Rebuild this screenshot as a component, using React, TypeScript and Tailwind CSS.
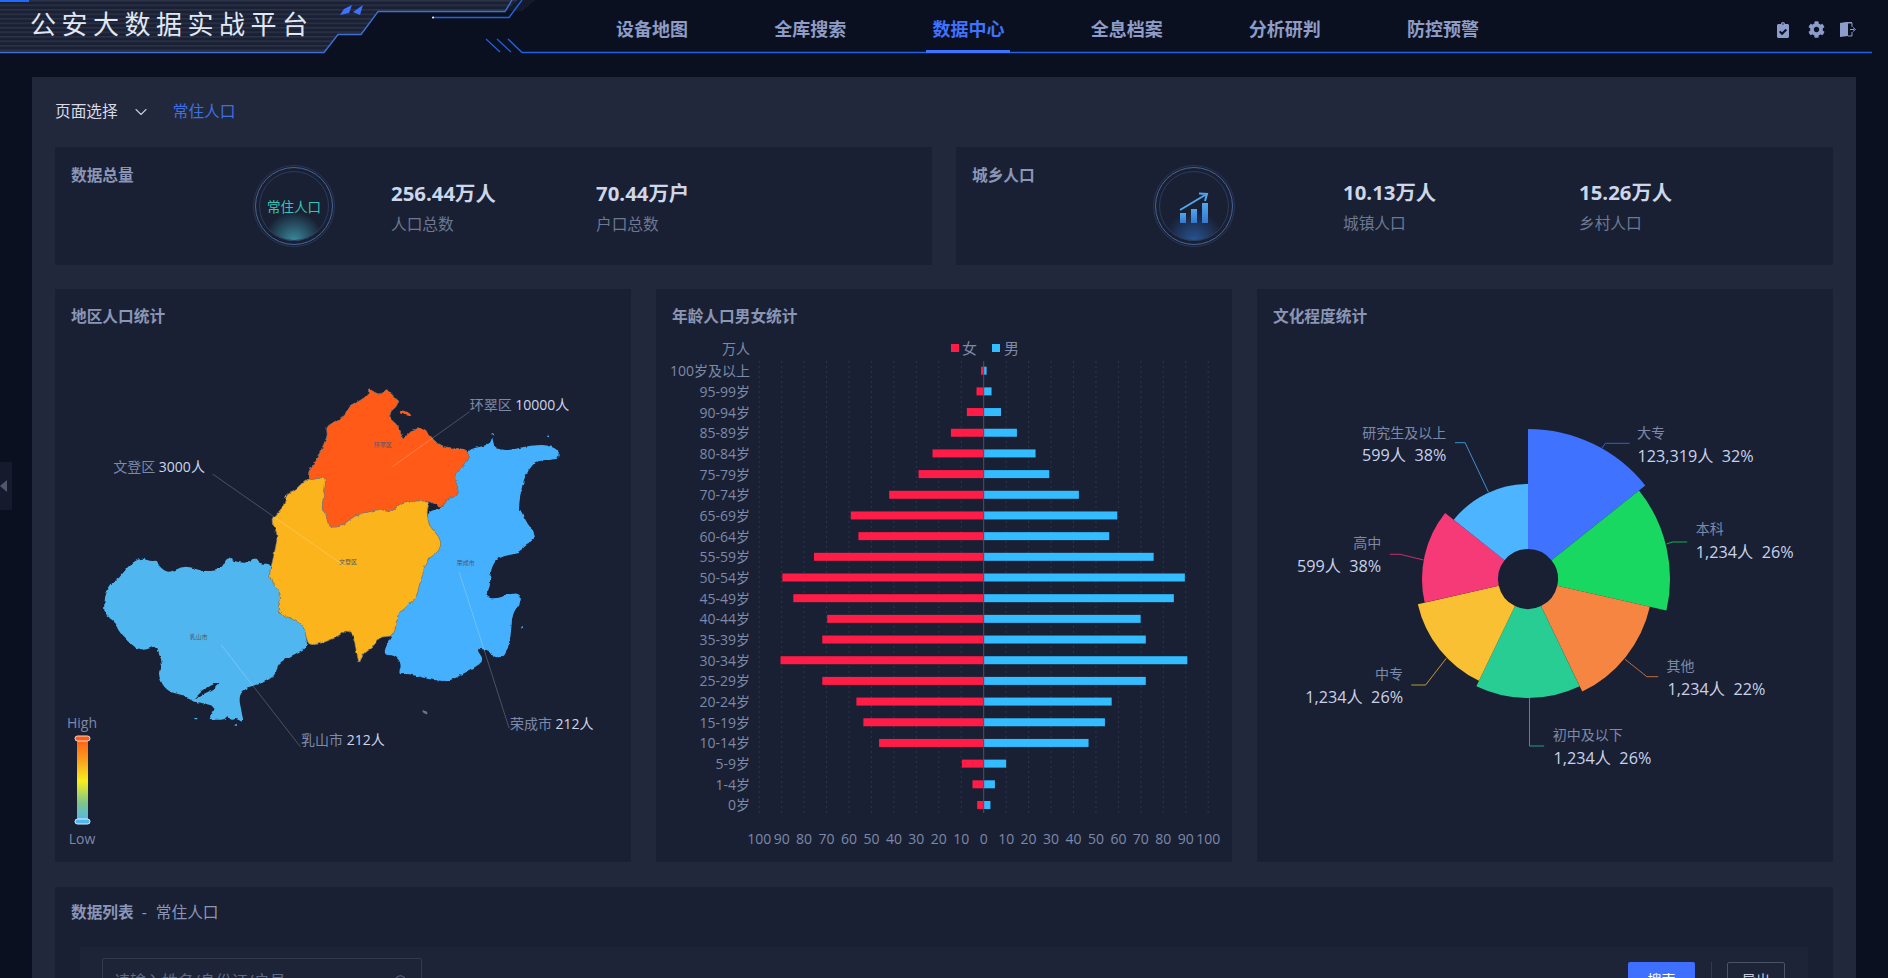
import { ReactNode } from "react";
import { FaClipboardCheck, FaCog } from "react-icons/fa";
import { ChevronDown, Search } from "lucide-react";

const nav = ["设备地图", "全库搜索", "数据中心", "全息档案", "分析研判", "防控预警"];

// chart svgs use page pixels in their viewBox, z* helpers convert traced coords
const mx = (z: number) => 50 + z / 2.657;
const my = (z: number) => 370 + z / 3;
const px = (z: number) => 1260 + z / 2.657;
const py = (z: number) => 400 + z / 3;

// closed outline rounded through edge midpoints, keeps the coast from looking polygonal
function coast(flat: number[]) {
    const pts: [number, number][] = [];
    for (let i = 0; i < flat.length; i += 2) pts.push([mx(flat[i]), my(flat[i + 1])]);
    const mid = (a: [number, number], b: [number, number]) => `${((a[0] + b[0]) / 2).toFixed(1)} ${((a[1] + b[1]) / 2).toFixed(1)}`;
    let d = `M${mid(pts[pts.length - 1], pts[0])}`;
    pts.forEach((p, i) => {
        d += ` Q${p[0].toFixed(1)} ${p[1].toFixed(1)} ${mid(p, pts[(i + 1) % pts.length])}`;
    });
    return d + " Z";
}

const huancui = [685,325,690,295,712,268,730,215,738,195,733,168,770,150,785,135,792,108,820,95,832,85,848,75,845,55,860,65,870,72,885,70,895,55,905,72,925,88,922,110,905,122,900,145,925,165,938,213,955,185,985,172,1010,195,1018,208,1040,232,1110,237,1115,260,1095,295,1072,318,1082,345,1087,375,1060,385,1040,415,1010,392,950,393,930,400,905,430,880,415,850,425,810,435,780,465,760,472,740,470,735,435,720,420,735,335,725,320,700,330];
const wendeng = [590,445,622,410,628,372,650,365,685,325,700,330,725,320,735,335,720,420,735,435,740,470,760,472,780,465,810,435,850,425,880,415,905,430,930,400,950,393,1010,392,1000,425,1008,470,1035,500,1040,530,1025,552,1000,570,990,615,980,650,975,680,945,715,925,730,915,790,905,800,875,800,860,830,830,850,822,885,815,850,805,790,785,780,770,800,690,832,680,800,675,770,650,750,600,725,617,680,600,650,580,620,590,580,600,530,605,490,590,460];
const rongcheng = [1110,237,1170,225,1175,195,1180,235,1215,242,1260,230,1295,225,1320,225,1345,235,1358,258,1340,270,1295,270,1270,300,1255,340,1245,410,1250,420,1270,465,1290,490,1285,510,1255,530,1250,550,1190,560,1170,600,1170,650,1155,680,1185,688,1230,668,1252,675,1250,700,1228,730,1225,800,1210,860,1180,868,1170,840,1130,835,1155,870,1125,895,1100,910,1060,935,1020,930,985,922,945,910,925,915,935,880,915,855,883,855,905,800,915,790,925,730,945,715,975,680,980,650,990,615,1000,570,1025,552,1040,530,1035,500,1008,470,1000,425,1040,415,1060,385,1087,375,1082,345,1072,318,1095,295,1115,260];
const rushan = [590,580,580,620,600,650,617,680,600,725,650,750,675,770,680,800,685,832,640,858,605,880,600,915,565,940,530,948,500,975,510,1030,515,1060,495,1045,480,1052,472,1035,465,1048,445,1050,420,1045,440,1010,410,1000,378,995,355,975,310,965,285,915,300,880,288,850,285,825,245,845,205,815,180,780,170,750,140,735,150,650,185,625,205,590,240,562,270,575,285,570,290,590,315,610,345,590,375,590,410,605,455,600,470,560,490,575,530,580,545,560,555,582];
const bay = [376,998,400,965,430,945,450,935,440,955,415,968,385,985];
const islands = [
    { pts: [925,125,945,120,965,140,940,135], fill: "#ff5a17" },
    { pts: [380,1050,392,1042,392,1052], fill: "#50b6f0" },
    { pts: [488,1072,495,1058,498,1068], fill: "#50b6f0" },
    { pts: [988,1020,1000,1022,1005,1034,992,1030], fill: "#6a7690" },
    { pts: [1250,775,1256,765,1257,777], fill: "#45b0fd" },
    { pts: [1318,198,1326,196,1326,203], fill: "#45b0fd" },
    { pts: [1170,192,1178,188,1180,198], fill: "#45b0fd" },
];

const mapLabels = [
    { name: "环翠区", val: "10000人", x: 1115, y: 102 },
    { name: "文登区", val: "3000人", x: 168, y: 288 },
    { name: "荣成市", val: "212人", x: 1222, y: 1058 },
    { name: "乳山市", val: "212人", x: 667, y: 1108 },
];
const mapLines = [
    [910, 290, 1115, 125],
    [785, 590, 432, 312],
    [1087, 605, 1220, 1075],
    [455, 825, 665, 1130],
];
const mapSmall = [
    { t: "环翠区", x: 884, y: 225 },
    { t: "文登区", x: 792, y: 576 },
    { t: "荣成市", x: 1105, y: 578 },
    { t: "乳山市", x: 395, y: 802 },
];

const ages: [string, number, number][] = [
    ["100岁及以上", 1.2, 1.3], ["95-99岁", 3.2, 3.5], ["90-94岁", 7.5, 7.7], ["85-89岁", 14.6, 14.8],
    ["80-84岁", 22.8, 23.1], ["75-79岁", 29, 29.2], ["70-74岁", 42.1, 42.4], ["65-69岁", 59.2, 59.5],
    ["60-64岁", 55.8, 55.9], ["55-59岁", 75.6, 75.7], ["50-54岁", 89.7, 89.6], ["45-49岁", 84.8, 84.7],
    ["40-44岁", 69.7, 69.9], ["35-39岁", 71.9, 72.2], ["30-34岁", 90.5, 90.7], ["25-29岁", 71.9, 72.2],
    ["20-24岁", 56.7, 57], ["15-19岁", 53.6, 54], ["10-14岁", 46.6, 46.7], ["5-9岁", 9.7, 10],
    ["1-4岁", 5, 5], ["0岁", 2.9, 3],
];
const ticks = [100, 90, 80, 70, 60, 50, 40, 30, 20, 10, 0, 10, 20, 30, 40, 50, 60, 70, 80, 90, 100];

const zero = 983.7;
const perUnit = 2.245;

const slices = [
    { r: 150, color: "#3f72ff" },
    { r: 142, color: "#18d862" },
    { r: 125, color: "#f68542" },
    { r: 119, color: "#27cd92" },
    { r: 113, color: "#fac033" },
    { r: 106, color: "#f63a78" },
    { r: 95, color: "#4db5ff" },
];

function sector(r: number, i: number) {
    const cx = 1528, cy = 579, r0 = 30;
    const step = (Math.PI * 2) / 7;
    const a0 = i * step, a1 = (i + 1) * step;
    const p = (rad: number, a: number) => `${(cx + rad * Math.sin(a)).toFixed(2)} ${(cy - rad * Math.cos(a)).toFixed(2)}`;
    return `M${p(r0, a0)} L${p(r, a0)} A${r} ${r} 0 0 1 ${p(r, a1)} L${p(r0, a1)} A${r0} ${r0} 0 0 0 ${p(r0, a0)} Z`;
}

const pieLabels = [
    { name: "大专", val: "123,319人  32%", line: [908, 145, 918, 130, 982, 130], nx: 1002, ny: 98, vx: 1003, vy: 168, color: "#3f72ff", end: false },
    { name: "本科", val: "1,234人  26%", line: [1080, 432, 1095, 426, 1135, 426], nx: 1158, ny: 385, vx: 1158, vy: 455, color: "#18d862", end: false },
    { name: "其他", val: "1,234人  22%", line: [970, 778, 1028, 830, 1058, 830], nx: 1080, ny: 796, vx: 1083, vy: 866, color: "#f68542", end: false },
    { name: "初中及以下", val: "1,234人  26%", line: [716, 893, 716, 1038, 755, 1038], nx: 778, ny: 1004, vx: 780, vy: 1075, color: "#27cd92", end: false },
    { name: "中专", val: "1,234人  26%", line: [495, 775, 440, 855, 402, 855], nx: 380, ny: 821, vx: 380, vy: 890, color: "#fac033", end: true },
    { name: "高中", val: "599人  38%", line: [435, 480, 372, 463, 345, 463], nx: 322, ny: 428, vx: 322, vy: 497, color: "#f63a78", end: true },
    { name: "研究生及以上", val: "599人  38%", line: [607, 277, 545, 128, 518, 128], nx: 495, ny: 96, vx: 495, vy: 165, color: "#4db5ff", end: true },
];

function Ring({ id, glow, children }: { id: string; glow: string; children: ReactNode }) {
    return (
        <div className="relative w-[82px] h-[82px] shrink-0 flex items-center justify-center">
            <svg className="absolute inset-0" width="82" height="82" viewBox="0 0 82 82">
                <defs>
                    <radialGradient id={id} cx="50%" cy="100%" r="42%">
                        <stop offset="0%" stopColor={glow} stopOpacity="0.85" />
                        <stop offset="100%" stopColor={glow} stopOpacity="0" />
                    </radialGradient>
                </defs>
                <circle cx="41" cy="41" r="35" fill={`url(#${id})`} />
                <circle cx="41" cy="41" r="40.5" fill="none" stroke="#263654" strokeWidth="1" />
                <circle cx="41" cy="41" r="38.5" fill="none" stroke="#4a6594" strokeWidth="1" />
                <circle cx="41" cy="41" r="34.5" fill="none" stroke="#2b3b5c" strokeWidth="1" />
            </svg>
            {children}
        </div>
    );
}

function Stat({ value, label, className }: { value: string; label: string; className: string }) {
    return (
        <div className={className}>
            <div className="text-[20.4px] leading-[28px] font-bold text-[#ced6ea]">{value}</div>
            <div className="mt-[5px] text-[15.7px] leading-6 text-[#6d7893]">{label}</div>
        </div>
    );
}

function ChartCard({ title, children }: { title: string; children: ReactNode }) {
    return (
        <div className="w-[576px] h-[573px] bg-[#192034] flex flex-col">
            <div className="h-[47px] shrink-0 pl-4 pt-[16px] text-[15.7px] leading-[22px] font-bold text-[#8b96b6]">{title}</div>
            {children}
        </div>
    );
}

function MapChart() {
    return (
        <svg width="576" height="526" viewBox="55 336 576 526">
            <defs>
                <filter id="rough" filterUnits="userSpaceOnUse" x="55" y="336" width="576" height="526" colorInterpolationFilters="sRGB">
                    <feTurbulence type="fractalNoise" baseFrequency="0.18" numOctaves="2" seed="4" />
                    <feDisplacementMap in="SourceGraphic" scale="3.5" xChannelSelector="R" yChannelSelector="G" />
                </filter>
                <linearGradient id="legend" x1="0" y1="0" x2="0" y2="1">
                    <stop offset="0%" stopColor="#ff5a17" />
                    <stop offset="25%" stopColor="#fb9a1c" />
                    <stop offset="52%" stopColor="#f6ee1e" />
                    <stop offset="78%" stopColor="#7fc68a" />
                    <stop offset="100%" stopColor="#50b6f0" />
                </linearGradient>
            </defs>
            <g filter="url(#rough)">
                <path d={coast(rushan)} fill="#50b6f0" />
                <path d={coast(bay)} fill="#192034" />
                <path d={coast(rongcheng)} fill="#45b0fd" />
                <path d={coast(wendeng)} fill="#fbb41c" stroke="#80807a" strokeWidth="0.7" />
                <path d={coast(huancui)} fill="#ff5a17" stroke="#80807a" strokeWidth="0.7" />
                {islands.map((s, i) => (
                    <path key={i} d={coast(s.pts)} fill={s.fill} />
                ))}
            </g>
            {mapSmall.map(s => (
                <text key={s.t} x={mx(s.x)} y={my(s.y)} fontSize="6" fill="#4c5868" textAnchor="middle" dominantBaseline="central">{s.t}</text>
            ))}
            {mapLines.map((l, i) => (
                <line key={i} x1={mx(l[0])} y1={my(l[1])} x2={mx(l[2])} y2={my(l[3])} stroke="#ffffff" strokeOpacity="0.28" strokeWidth="0.8" />
            ))}
            {mapLabels.map(l => (
                <text key={l.name} x={mx(l.x)} y={my(l.y)} fontSize="14" dominantBaseline="central">
                    <tspan fill="#7d89a8">{l.name} </tspan>
                    <tspan fill="#ced6ea">{l.val}</tspan>
                </text>
            ))}
            <text x="82" y="722" fontSize="14" fill="#7d89a8" textAnchor="middle" dominantBaseline="central">High</text>
            <rect x="77" y="738" width="11" height="83" fill="url(#legend)" />
            <rect x="75" y="736" width="15" height="5" rx="2.5" fill="#ff5a17" stroke="#f3d9cc" strokeWidth="1" />
            <rect x="75" y="819" width="15" height="5" rx="2.5" fill="#50b6f0" stroke="#dff1fb" strokeWidth="1" />
            <text x="82" y="838" fontSize="14" fill="#7d89a8" textAnchor="middle" dominantBaseline="central">Low</text>
        </svg>
    );
}

function PyramidChart() {
    return (
        <svg width="576" height="526" viewBox="656 336 576 526">
            {ticks.map((_, i) => {
                const x = zero + (i - 10) * 22.45;
                return i === 10 ? null : <line key={i} x1={x} y1="361" x2={x} y2="813" stroke="#2c354c" strokeWidth="1" strokeDasharray="2 3" />;
            })}
            <text x="750" y="348" fontSize="14" fill="#7d89a8" textAnchor="end" dominantBaseline="central">万人</text>
            <rect x="951" y="344" width="8" height="8" fill="#ff1d47" />
            <text x="962" y="347.5" fontSize="15" fill="#7d89a8" dominantBaseline="central">女</text>
            <rect x="992" y="344" width="8" height="8" fill="#33bcff" />
            <text x="1004" y="347.5" fontSize="15" fill="#7d89a8" dominantBaseline="central">男</text>
            {ages.map(([label, f, m], i) => {
                const y = 370.7 + i * 20.68;
                return (
                    <g key={label}>
                        <text x="750" y={y} fontSize="14" fill="#7d89a8" textAnchor="end" dominantBaseline="central">{label}</text>
                        <rect x={zero - f * perUnit} y={y - 4} width={f * perUnit} height="8" fill="#ff1d47" />
                        <rect x={zero} y={y - 4} width={m * perUnit} height="8" fill="#33bcff" />
                    </g>
                );
            })}
            <line x1={zero} y1="361" x2={zero} y2="813" stroke="#4a5268" strokeWidth="1" />
            {ticks.map((t, i) => (
                <text key={i} x={zero + (i - 10) * 22.45} y="838" fontSize="14" fill="#7d89a8" textAnchor="middle" dominantBaseline="central">{t}</text>
            ))}
        </svg>
    );
}

function RoseChart() {
    return (
        <svg width="576" height="526" viewBox="1257 336 576 526">
            {slices.map((s, i) => (
                <path key={s.color} d={sector(s.r, i)} fill={s.color} />
            ))}
            {pieLabels.map(l => {
                const pts = [];
                for (let i = 0; i < l.line.length; i += 2) pts.push(`${px(l.line[i]).toFixed(1)},${py(l.line[i + 1]).toFixed(1)}`);
                const anchor = l.end ? "end" : "start";
                return (
                    <g key={l.name}>
                        <polyline points={pts.join(" ")} fill="none" stroke={l.color} strokeOpacity="0.75" strokeWidth="1" />
                        <text x={px(l.nx)} y={py(l.ny)} fontSize="14" fill="#7d89a8" textAnchor={anchor} dominantBaseline="central">{l.name}</text>
                        <text x={px(l.vx)} y={py(l.vy)} fontSize="16.2" fill="#c8d2ea" textAnchor={anchor} dominantBaseline="central" className="whitespace-pre">{l.val}</text>
                    </g>
                );
            })}
        </svg>
    );
}

export default function App() {
    return (
        <div className="relative h-screen overflow-hidden bg-[#0b1020] font-['Open_Sans','Noto_Sans_CJK_SC',sans-serif]">
            {/* header art: striped banner + blue rule */}
            <svg className="absolute left-0 top-0" width="1888" height="54" viewBox="0 0 1888 54">
                <defs>
                    <pattern id="stripes" width="4" height="4.5" patternUnits="userSpaceOnUse">
                        <rect width="4" height="4.5" fill="#1b2134" />
                        <rect width="4" height="1.5" fill="#2b3247" />
                    </pattern>
                </defs>
                <polygon points="0,0 535,0 522,11 377,11 361,34 338,34 324,52 0,52" fill="url(#stripes)" />
                <polygon points="505,11 518,0 535,0 522,11" fill="#141a2c" />
                <polyline points="0,52.5 324,52.5 338,34.5 361,34.5 378,11.5 505,11.5 512,0" fill="none" stroke="#3f6fd0" strokeWidth="1.4" />
                <rect x="0" y="0" width="29" height="2" fill="#1f6bff" />
                <polygon points="340,15 344,9 352,5 349,13" fill="#3f72ff" />
                <polygon points="353,12 363,5 360,15" fill="#3f72ff" />
                <polyline points="433,17.5 509,17.5 522,0" fill="none" stroke="#1f62e6" strokeWidth="1.4" />
                <circle cx="433" cy="17.5" r="1" fill="#ffffff" />
                <line x1="486" y1="39" x2="500" y2="52" stroke="#1f62e6" strokeWidth="1.2" />
                <line x1="497" y1="39" x2="511" y2="52" stroke="#1f62e6" strokeWidth="1.2" />
                <polyline points="508,39 522,52.5 1872,52.5" fill="none" stroke="#1f62e6" strokeWidth="1.4" />
            </svg>

            <header className="relative flex h-[53px]">
                <div className="w-[573px] shrink-0 pl-[30px] pt-[8px] text-[26px] leading-[32px] tracking-[5.5px] text-[#e0e8f5]">公安大数据实战平台</div>
                <nav className="flex pt-[6px]">
                    {nav.map(item => (
                        <div key={item} className={`relative w-[158.2px] flex items-center justify-center text-[18px] font-bold ${item === "数据中心" ? "text-[#3f72ff]" : "text-[#8e9cc6]"}`}>
                            {item}
                            {item === "数据中心" && <span className="absolute bottom-0 left-[37px] w-[84px] h-[3px] bg-[#3f72ff]" />}
                        </div>
                    ))}
                </nav>
                <div className="flex-1 flex items-center justify-end pr-[32px] pt-[6px] text-[#8c9ccb]">
                    <FaClipboardCheck size={16} />
                    <FaCog size={17} className="ml-[17px]" />
                    <svg className="ml-[15px]" width="16" height="15" viewBox="0 0 16 15">
                        <path d="M0 1 L6 0 H12 V1 H8 V14 L0 15 Z" fill="currentColor" />
                        <path d="M8 1 H12 V5 M12 10 V14 H8 M10 7.5 H14 M13 5.5 L15.5 7.5 L13 9.5" fill="none" stroke="currentColor" strokeWidth="1" />
                    </svg>
                </div>
            </header>

            <div className="absolute left-0 top-[462px] w-[12px] h-[48px] bg-[#151b2c] flex items-center">
                <span className="w-0 h-0 border-y-[6px] border-y-transparent border-r-[7px] border-r-[#4f596e]" />
            </div>

            <main className="ml-[32px] mr-[32px] mt-[24px] bg-[#22283c] px-[23px] pb-6">
                <div className="h-[70px] flex items-center text-[15.7px]">
                    <span className="text-[#d8dcea]">页面选择</span>
                    <ChevronDown size={20} strokeWidth={1.3} className="ml-[13px] text-[#c4cadb]" />
                    <span className="ml-[22px] text-[#3f6fe0]">常住人口</span>
                </div>

                <div className="flex gap-[24px]">
                    <div className="w-[877px] h-[118px] bg-[#192034] flex items-center">
                        <div className="w-[198px] self-start pl-4 pt-[16px] text-[15.7px] leading-[24px] font-bold text-[#8b96b6]">数据总量</div>
                        <Ring id="glow1" glow="#3f9fb0"><span className="relative mt-[2px] text-[13.5px] text-[#36c5b5]">常住人口</span></Ring>
                        <Stat value="256.44万人" label="人口总数" className="ml-[56px] w-[205px] pt-[3px]" />
                        <Stat value="70.44万户" label="户口总数" className="pt-[3px]" />
                    </div>
                    <div className="flex-1 h-[118px] bg-[#192034] flex items-center">
                        <div className="w-[197px] self-start pl-4 pt-[16px] text-[15.7px] leading-[24px] font-bold text-[#8b96b6]">城乡人口</div>
                        <Ring id="glow2" glow="#2a5fa8">
                            <svg className="relative mt-[3px]" width="30" height="31" viewBox="0 0 30 31">
                                <defs>
                                    <linearGradient id="bar" x1="0" y1="0" x2="0" y2="1">
                                        <stop offset="0%" stopColor="#4fa8ee" />
                                        <stop offset="100%" stopColor="#3478cc" />
                                    </linearGradient>
                                </defs>
                                <rect x="1" y="21" width="6" height="10" fill="url(#bar)" />
                                <rect x="12" y="17" width="6" height="14" fill="url(#bar)" />
                                <rect x="23" y="11" width="6" height="20" fill="url(#bar)" />
                                <path d="M1 18 L27 2.5 M20 1.5 L28 2 L26 9" fill="none" stroke="#4fa8ee" strokeWidth="2" />
                            </svg>
                        </Ring>
                        <Stat value="10.13万人" label="城镇人口" className="ml-[108px] w-[236px] pt-[1px]" />
                        <Stat value="15.26万人" label="乡村人口" className="pt-[1px]" />
                    </div>
                </div>

                <div className="mt-[24px] flex gap-[25px]">
                    <ChartCard title="地区人口统计"><MapChart /></ChartCard>
                    <ChartCard title="年龄人口男女统计"><PyramidChart /></ChartCard>
                    <ChartCard title="文化程度统计"><RoseChart /></ChartCard>
                </div>

                <div className="mt-[25px] bg-[#192034] pb-6">
                    <div className="h-[52px] pl-4 flex items-center text-[15.7px] text-[#8b96b6]">
                        <span className="font-bold">数据列表</span>
                        <span className="ml-[8px]">-</span>
                        <span className="ml-[9px]">常住人口</span>
                    </div>
                    <div className="mt-[8px] mx-[25px] h-[200px] bg-[#1e2438] pt-[11px] pl-[22px] pr-[23px] flex items-start">
                        <div className="w-[320px] h-[46px] border border-[#323a50] rounded-[2px] flex items-center justify-between pl-[11px] pr-[13px] text-[#5f6a85]">
                            <span className="text-[16px]">请输入姓名/身份证/户号</span>
                            <Search size={14} />
                        </div>
                        <div className="ml-auto mt-[4px] flex items-start">
                            <button className="w-[67px] h-[35px] bg-[#3f6fff] rounded-[2px] text-[14px] text-white">搜索</button>
                            <span className="ml-[16px] w-px h-[36px] bg-[#323a50]" />
                            <button className="ml-[15px] w-[58px] h-[35px] border border-[#4a5268] rounded-[2px] text-[14px] text-[#c4cadb]">导出</button>
                        </div>
                    </div>
                </div>
            </main>
        </div>
    );
}
